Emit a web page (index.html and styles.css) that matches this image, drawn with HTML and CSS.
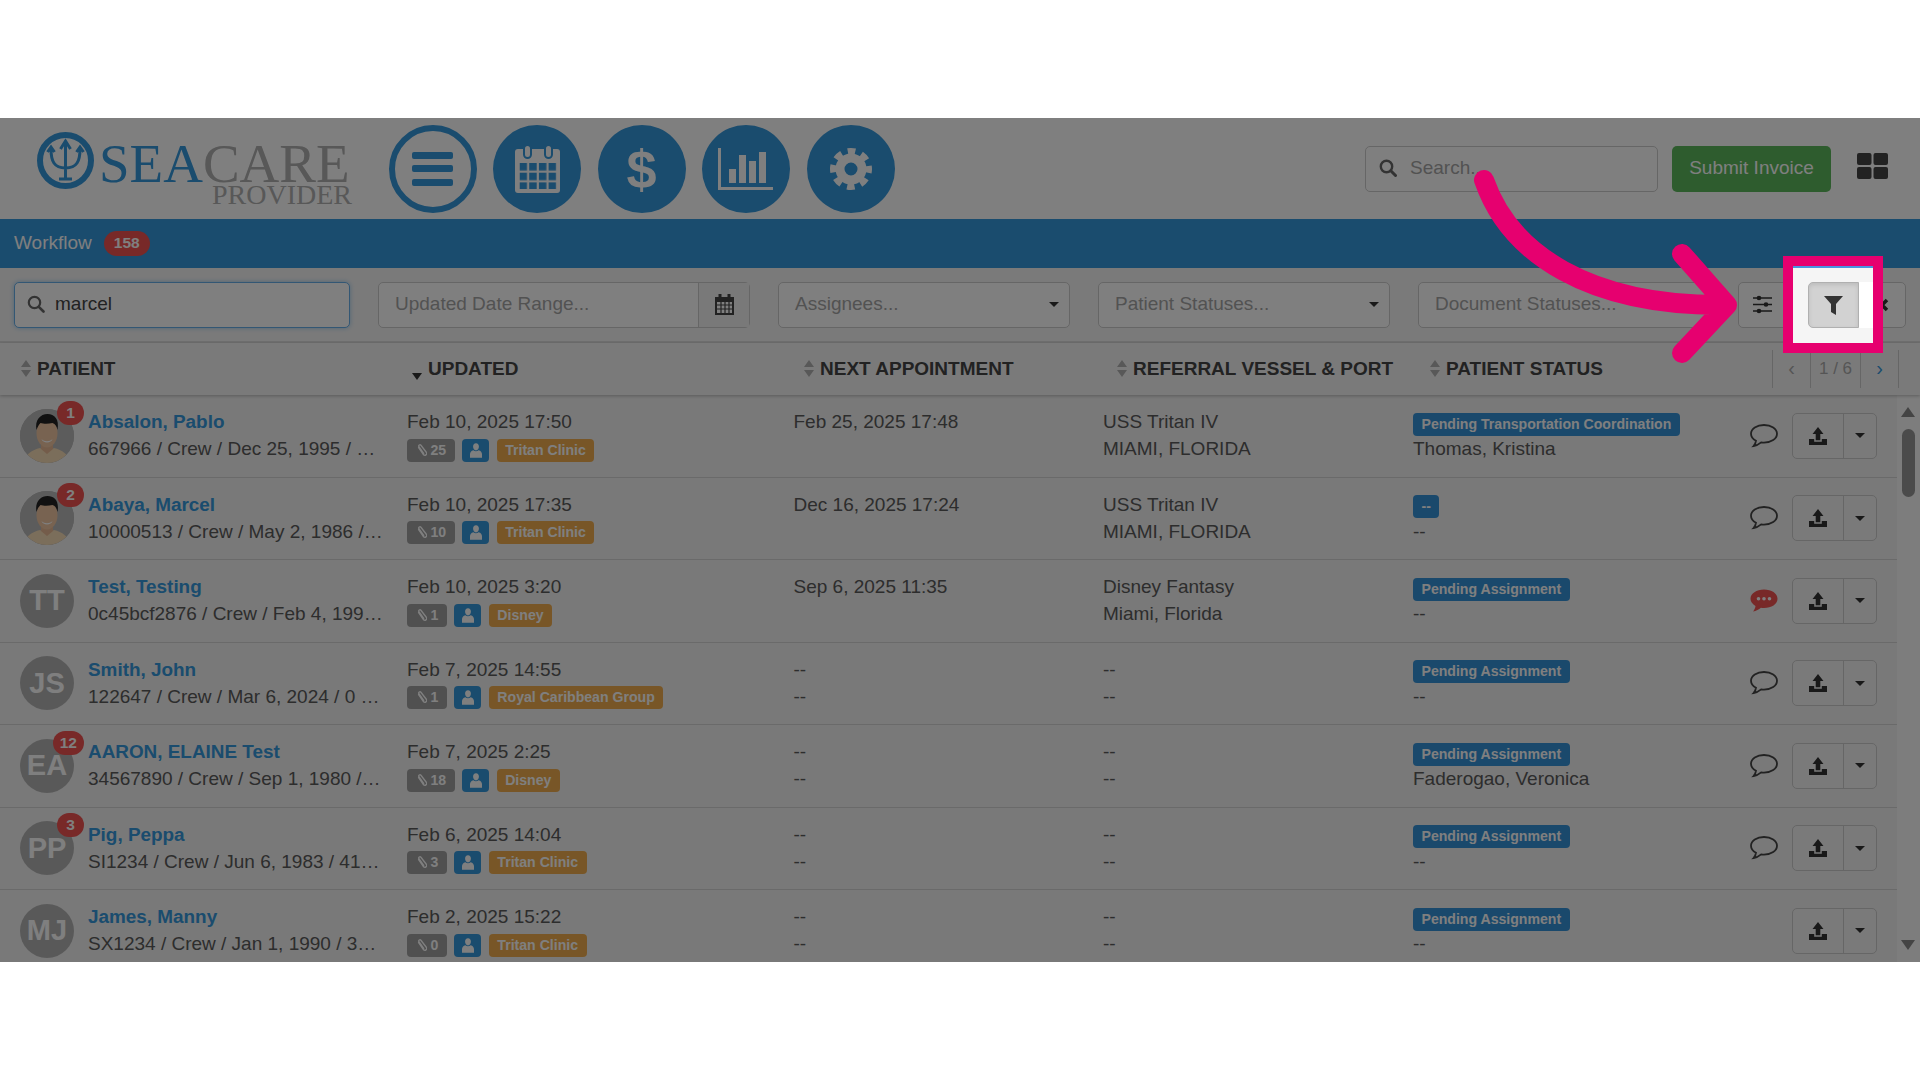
FILE: index.html
```html
<!DOCTYPE html>
<html lang="en">

<head>
  <meta charset="UTF-8">
  <title>SeaCare Provider - Workflow</title>
  <link rel="stylesheet" href="styles.css">
</head>

<body>
  <svg class="defs">
    <symbol id="i-clip" viewBox="0 0 12 16">
      <path d="M3.2 4.6l4.6 8.2a2 2 0 0 0 3.4-2L6 2.2A1.4 1.4 0 0 0 3.600 3.600l4.400 7.800" fill="none" stroke="currentColor" stroke-width="1.500" stroke-linecap="round" transform="rotate(-6 6 8)" />
    </symbol>
    <symbol id="i-user" viewBox="0 0 14 17">
      <path d="M7 0c2.200 0 3.400 1.600 3.400 3.800S9 8.400 7 8.400 3.600 6 3.600 3.800 4.800 0 7 0zM4 8.200c1.700 1.500 4.300 1.500 6 0 2.600.8 4 2.200 4 4.800v4H0v-4c0-2.600 1.400-4 4-4.800z" fill="currentColor" />
    </symbol>
    <symbol id="i-chat" viewBox="0 0 28 24">
      <path d="M14 1C6.800 1 1 4.800 1 9.700c0 3 2 5.400 5 7-.2 1.900-1.100 3.900-2.400 5.300 3-.4 5.800-2.100 7.600-3.600.9.100 1.800.2 2.800.2 7.200 0 13-3.800 13-8.900S21.200 1 14 1z" fill="none" stroke="currentColor" stroke-width="1.800" />
    </symbol>
    <symbol id="i-chat-on" viewBox="0 0 28 24">
      <path d="M14 .5C6.500.5.500 4.500.500 9.700c0 3 2 5.600 5 7.200-.2 1.900-1.100 3.900-2.400 5.600 3-.4 5.900-2.100 7.800-3.700.9.100 2 .2 3.100.2 7.500 0 13.500-4 13.500-9.300S21.500.5 14 .5z" fill="currentColor" />
      <circle cx="8.500" cy="9.700" r="1.800" fill="#fff" />
      <circle cx="14" cy="9.700" r="1.800" fill="#fff" />
      <circle cx="19.500" cy="9.700" r="1.800" fill="#fff" />
    </symbol>
    <symbol id="i-upload" viewBox="0 0 18 18">
      <path d="M9 0l5.500 7H11.300v6.200H6.700V7H3.500zM0 12h5.200v2.800h7.600V12H18v6H0z" fill="currentColor" />
    </symbol>
    <symbol id="i-face" viewBox="0 0 54 54">
      <rect width="54" height="54" fill="#b8b8b8" />
      <path d="M4 54c1-9 8-13 16-15l7 4 7-4c8 2 15 6 16 15z" fill="#f6dcb6" />
      <path d="M21 30h12v10l-6 5-6-5z" fill="#e8b994" />
      <ellipse cx="27" cy="24" rx="10.500" ry="14.500" fill="#f0c6a2" />
      <path d="M16.500 21c-2-10 4-16 11-16s12 5 10 16c-1-4-2-6-5-7-4 1-9 1-12 0-2 2-3 4-4 7z" fill="#222" />
      <path d="M21.500 30c3 3 8 3 11 0-1 4.500-10 4.500-11 0z" fill="#fff" />
    </symbol>
  </svg>

  <div class="app">
    <header class="topbar">
      <div class="logo">
        <svg class="logo-ring" viewBox="0 0 57 57">
          <circle cx="28.500" cy="28.500" r="25.500" fill="none" stroke="#3598dc" stroke-width="6" />
          <path d="M28.500 9v39M22 47h13M23.500 17l5-8 5 8M14 17c0 12 3 19 14.500 19S43 29 43 17M10.500 20l3.500-5 3.500 5M39.500 20l3.500-5 3.500 5" fill="none" stroke="#3598dc" stroke-width="3" />
        </svg>
        <div class="logo-text">
          <div class="logo-main"><span class="logo-sea">SEA</span>CARE</div>
          <div class="logo-sub">PROVIDER</div>
        </div>
      </div>

      <div class="circles">
        <div class="circle circle-menu">
          <span></span><span></span><span></span>
        </div>
        <div class="circle">
          <svg width="45" height="48" viewBox="0 0 45 48">
            <defs>
              <pattern id="cal-cells" x="4.500" y="18" width="9.700" height="9.700" patternUnits="userSpaceOnUse">
                <rect width="7.500" height="7.500" fill="#3598dc" />
              </pattern>
            </defs>
            <rect y="4" width="45" height="44" rx="3" fill="#fff" />
            <rect x="4.500" y="18" width="37" height="26" fill="url(#cal-cells)" />
            <rect x="9" y="0" width="7" height="13" rx="3.500" fill="#fff" stroke="#3598dc" stroke-width="2" />
            <rect x="30" y="0" width="7" height="13" rx="3.500" fill="#fff" stroke="#3598dc" stroke-width="2" />
          </svg>
        </div>
        <div class="circle"><span class="dollar">$</span></div>
        <div class="circle">
          <svg width="56" height="42" viewBox="0 0 56 42">
            <path d="M1.500 0v40.500H55" fill="none" stroke="#fff" stroke-width="3" />
            <rect x="11" y="21" width="7" height="14" fill="#fff" />
            <rect x="21" y="7" width="7" height="28" fill="#fff" />
            <rect x="31" y="13" width="7" height="22" fill="#fff" />
            <rect x="41" y="4" width="7" height="31" fill="#fff" />
          </svg>
        </div>
        <div class="circle">
          <svg width="44" height="44" viewBox="0 0 44 44">
            <circle cx="22" cy="22" r="11" fill="none" stroke="#fff" stroke-width="9" />
            <circle cx="22" cy="22" r="17.500" fill="none" stroke="#fff" stroke-width="7" stroke-dasharray="7.500 6.240" stroke-dashoffset="3.750" />
          </svg>
        </div>
      </div>

      <div class="top-right">
        <div class="top-search">
          <svg class="search-icon" width="18" height="18" viewBox="0 0 18 18">
            <circle cx="7.500" cy="7.500" r="5.700" fill="none" stroke="currentColor" stroke-width="2.400" />
            <path d="M11.800 11.800L16.500 16.500" stroke="currentColor" stroke-width="3" stroke-linecap="round" />
          </svg>
          <span class="placeholder">Search...</span>
        </div>
        <button class="submit">Submit Invoice</button>
        <svg class="apps" width="31" height="26" viewBox="0 0 31 26">
          <rect width="14.500" height="12" rx="2" />
          <rect x="16.500" width="14.500" height="12" rx="2" />
          <rect y="14" width="14.500" height="12" rx="2" />
          <rect x="16.500" y="14" width="14.500" height="12" rx="2" />
        </svg>
      </div>
    </header>

    <nav class="subnav">
      <span>Workflow</span>
      <span class="count">158</span>
    </nav>

    <div class="toolbar">
      <div class="field field-search">
        <svg class="search-icon" width="18" height="18" viewBox="0 0 18 18">
          <circle cx="7.500" cy="7.500" r="5.700" fill="none" stroke="currentColor" stroke-width="2.200" />
          <path d="M11.800 11.800L16.500 16.500" stroke="currentColor" stroke-width="2.600" stroke-linecap="round" />
        </svg>
        <span>marcel</span>
      </div>
      <div class="field field-date">
        <span class="placeholder">Updated Date Range...</span>
        <span class="addon">
          <svg width="19" height="21" viewBox="0 0 19 21">
            <path d="M0 3h19v18H0z" fill="#444" />
            <path d="M2 8h15v11H2z" fill="#fff" />
            <path d="M2 11h15M2 15h15M6 8v11M10 8v11M14 8v11" stroke="#444" stroke-width="1.200" />
            <rect x="3.500" width="3" height="6" fill="#444" />
            <rect x="12.500" width="3" height="6" fill="#444" />
          </svg>
        </span>
      </div>
      <div class="field field-select"><span class="placeholder">Assignees...</span><i class="caret"></i></div>
      <div class="field field-select"><span class="placeholder">Patient Statuses...</span><i class="caret"></i></div>
      <div class="field field-select"><span class="placeholder">Document Statuses...</span></div>
      <div class="tool-group">
        <div class="tool tool-sliders">
          <svg width="19" height="19" viewBox="0 0 19 19">
            <path d="M0 3h19M0 9.500h19M0 16h19" stroke="#333" stroke-width="1.500" />
            <circle cx="6" cy="3" r="2.300" fill="#333" />
            <circle cx="13" cy="9.500" r="2.300" fill="#333" />
            <circle cx="6" cy="16" r="2.300" fill="#333" />
          </svg>
        </div>
        <div class="tool tool-filter"></div>
        <div class="tool tool-close">
          <svg width="14" height="14" viewBox="0 0 14 14">
            <path d="M2 2l10 10M12 2L2 12" stroke="#333" stroke-width="3.500" />
          </svg>
        </div>
      </div>
    </div>

    <div class="thead">
      <div class="th th-first"><i class="sort"></i>PATIENT</div>
      <div class="th"><i class="sort sort-down"></i>UPDATED</div>
      <div class="th"><i class="sort"></i>NEXT APPOINTMENT</div>
      <div class="th"><i class="sort"></i>REFERRAL VESSEL &amp; PORT</div>
      <div class="th th-last">
        <i class="sort"></i>PATIENT STATUS
        <div class="pager">
          <span class="pager-cell pager-prev">&#8249;</span>
          <span class="pager-cell pager-num">1 / 6</span>
          <span class="pager-cell pager-next">&#8250;</span>
        </div>
      </div>
    </div>

    <div class="tbody">
      <div class="rows">
        <div class="row">
          <div class="patient">
            <div class="avatar"><svg width="54" height="54"><use href="#i-face" /></svg><span class="notify">1</span></div>
            <div class="stack">
              <a class="name">Absalon, Pablo</a>
              <div class="line">667966 / Crew / Dec 25, 1995 / …</div>
            </div>
          </div>
          <div class="stack">
            <div class="line">Feb 10, 2025 17:50</div>
            <div class="chips">
              <span class="chip chip-clip"><svg width="11" height="15"><use href="#i-clip" /></svg>25</span>
              <span class="chip chip-user"><svg width="12" height="15"><use href="#i-user" /></svg></span>
              <span class="chip chip-org">Tritan Clinic</span>
            </div>
          </div>
          <div class="stack">
            <div class="line">Feb 25, 2025 17:48</div>
            <div class="line"></div>
          </div>
          <div class="stack">
            <div class="line">USS Tritan IV</div>
            <div class="line">MIAMI, FLORIDA</div>
          </div>
          <div class="status">
            <div class="stack">
              <div class="status-top"><span class="chip chip-status">Pending Transportation Coordination</span></div>
              <div class="line">Thomas, Kristina</div>
            </div>
            <svg class="chat" width="28" height="24"><use href="#i-chat" /></svg>
            <div class="actions">
              <span class="act-main"><svg width="18" height="18"><use href="#i-upload" /></svg></span>
              <span class="act-more"><i class="caret"></i></span>
            </div>
          </div>
        </div>

        <div class="row">
          <div class="patient">
            <div class="avatar"><svg width="54" height="54"><use href="#i-face" /></svg><span class="notify">2</span></div>
            <div class="stack">
              <a class="name">Abaya, Marcel</a>
              <div class="line">10000513 / Crew / May 2, 1986 /…</div>
            </div>
          </div>
          <div class="stack">
            <div class="line">Feb 10, 2025 17:35</div>
            <div class="chips">
              <span class="chip chip-clip"><svg width="11" height="15"><use href="#i-clip" /></svg>10</span>
              <span class="chip chip-user"><svg width="12" height="15"><use href="#i-user" /></svg></span>
              <span class="chip chip-org">Tritan Clinic</span>
            </div>
          </div>
          <div class="stack">
            <div class="line">Dec 16, 2025 17:24</div>
            <div class="line"></div>
          </div>
          <div class="stack">
            <div class="line">USS Tritan IV</div>
            <div class="line">MIAMI, FLORIDA</div>
          </div>
          <div class="status">
            <div class="stack">
              <div class="status-top"><span class="chip chip-status">--</span></div>
              <div class="line">--</div>
            </div>
            <svg class="chat" width="28" height="24"><use href="#i-chat" /></svg>
            <div class="actions">
              <span class="act-main"><svg width="18" height="18"><use href="#i-upload" /></svg></span>
              <span class="act-more"><i class="caret"></i></span>
            </div>
          </div>
        </div>

        <div class="row">
          <div class="patient">
            <div class="avatar">TT</div>
            <div class="stack">
              <a class="name">Test, Testing</a>
              <div class="line">0c45bcf2876 / Crew / Feb 4, 199…</div>
            </div>
          </div>
          <div class="stack">
            <div class="line">Feb 10, 2025 3:20</div>
            <div class="chips">
              <span class="chip chip-clip"><svg width="11" height="15"><use href="#i-clip" /></svg>1</span>
              <span class="chip chip-user"><svg width="12" height="15"><use href="#i-user" /></svg></span>
              <span class="chip chip-org">Disney</span>
            </div>
          </div>
          <div class="stack">
            <div class="line">Sep 6, 2025 11:35</div>
            <div class="line"></div>
          </div>
          <div class="stack">
            <div class="line">Disney Fantasy</div>
            <div class="line">Miami, Florida</div>
          </div>
          <div class="status">
            <div class="stack">
              <div class="status-top"><span class="chip chip-status">Pending Assignment</span></div>
              <div class="line">--</div>
            </div>
            <svg class="chat chat-on" width="28" height="24"><use href="#i-chat-on" /></svg>
            <div class="actions">
              <span class="act-main"><svg width="18" height="18"><use href="#i-upload" /></svg></span>
              <span class="act-more"><i class="caret"></i></span>
            </div>
          </div>
        </div>

        <div class="row">
          <div class="patient">
            <div class="avatar">JS</div>
            <div class="stack">
              <a class="name">Smith, John</a>
              <div class="line">122647 / Crew / Mar 6, 2024 / 0 …</div>
            </div>
          </div>
          <div class="stack">
            <div class="line">Feb 7, 2025 14:55</div>
            <div class="chips">
              <span class="chip chip-clip"><svg width="11" height="15"><use href="#i-clip" /></svg>1</span>
              <span class="chip chip-user"><svg width="12" height="15"><use href="#i-user" /></svg></span>
              <span class="chip chip-org">Royal Caribbean Group</span>
            </div>
          </div>
          <div class="stack">
            <div class="line">--</div>
            <div class="line">--</div>
          </div>
          <div class="stack">
            <div class="line">--</div>
            <div class="line">--</div>
          </div>
          <div class="status">
            <div class="stack">
              <div class="status-top"><span class="chip chip-status">Pending Assignment</span></div>
              <div class="line">--</div>
            </div>
            <svg class="chat" width="28" height="24"><use href="#i-chat" /></svg>
            <div class="actions">
              <span class="act-main"><svg width="18" height="18"><use href="#i-upload" /></svg></span>
              <span class="act-more"><i class="caret"></i></span>
            </div>
          </div>
        </div>

        <div class="row">
          <div class="patient">
            <div class="avatar">EA<span class="notify">12</span></div>
            <div class="stack">
              <a class="name">AARON, ELAINE Test</a>
              <div class="line">34567890 / Crew / Sep 1, 1980 /…</div>
            </div>
          </div>
          <div class="stack">
            <div class="line">Feb 7, 2025 2:25</div>
            <div class="chips">
              <span class="chip chip-clip"><svg width="11" height="15"><use href="#i-clip" /></svg>18</span>
              <span class="chip chip-user"><svg width="12" height="15"><use href="#i-user" /></svg></span>
              <span class="chip chip-org">Disney</span>
            </div>
          </div>
          <div class="stack">
            <div class="line">--</div>
            <div class="line">--</div>
          </div>
          <div class="stack">
            <div class="line">--</div>
            <div class="line">--</div>
          </div>
          <div class="status">
            <div class="stack">
              <div class="status-top"><span class="chip chip-status">Pending Assignment</span></div>
              <div class="line">Faderogao, Veronica</div>
            </div>
            <svg class="chat" width="28" height="24"><use href="#i-chat" /></svg>
            <div class="actions">
              <span class="act-main"><svg width="18" height="18"><use href="#i-upload" /></svg></span>
              <span class="act-more"><i class="caret"></i></span>
            </div>
          </div>
        </div>

        <div class="row">
          <div class="patient">
            <div class="avatar">PP<span class="notify">3</span></div>
            <div class="stack">
              <a class="name">Pig, Peppa</a>
              <div class="line">SI1234 / Crew / Jun 6, 1983 / 41…</div>
            </div>
          </div>
          <div class="stack">
            <div class="line">Feb 6, 2025 14:04</div>
            <div class="chips">
              <span class="chip chip-clip"><svg width="11" height="15"><use href="#i-clip" /></svg>3</span>
              <span class="chip chip-user"><svg width="12" height="15"><use href="#i-user" /></svg></span>
              <span class="chip chip-org">Tritan Clinic</span>
            </div>
          </div>
          <div class="stack">
            <div class="line">--</div>
            <div class="line">--</div>
          </div>
          <div class="stack">
            <div class="line">--</div>
            <div class="line">--</div>
          </div>
          <div class="status">
            <div class="stack">
              <div class="status-top"><span class="chip chip-status">Pending Assignment</span></div>
              <div class="line">--</div>
            </div>
            <svg class="chat" width="28" height="24"><use href="#i-chat" /></svg>
            <div class="actions">
              <span class="act-main"><svg width="18" height="18"><use href="#i-upload" /></svg></span>
              <span class="act-more"><i class="caret"></i></span>
            </div>
          </div>
        </div>

        <div class="row">
          <div class="patient">
            <div class="avatar">MJ</div>
            <div class="stack">
              <a class="name">James, Manny</a>
              <div class="line">SX1234 / Crew / Jan 1, 1990 / 3…</div>
            </div>
          </div>
          <div class="stack">
            <div class="line">Feb 2, 2025 15:22</div>
            <div class="chips">
              <span class="chip chip-clip"><svg width="11" height="15"><use href="#i-clip" /></svg>0</span>
              <span class="chip chip-user"><svg width="12" height="15"><use href="#i-user" /></svg></span>
              <span class="chip chip-org">Tritan Clinic</span>
            </div>
          </div>
          <div class="stack">
            <div class="line">--</div>
            <div class="line">--</div>
          </div>
          <div class="stack">
            <div class="line">--</div>
            <div class="line">--</div>
          </div>
          <div class="status">
            <div class="stack">
              <div class="status-top"><span class="chip chip-status">Pending Assignment</span></div>
              <div class="line">--</div>
            </div>
            <span class="chat"></span>
            <div class="actions">
              <span class="act-main"><svg width="18" height="18"><use href="#i-upload" /></svg></span>
              <span class="act-more"><i class="caret"></i></span>
            </div>
          </div>
        </div>
      </div>

      <div class="scrollbar">
        <i class="scroll-up"></i>
        <i class="scroll-thumb"></i>
        <i class="scroll-down"></i>
      </div>
    </div>

    <!-- tutorial overlay: dims the page, leaves the filter button lit -->
    <div class="dim"></div>
    <div class="spot">
      <div class="spot-strip"></div>
      <div class="spot-row">
        <div class="spot-btn">
          <svg width="19" height="21" viewBox="0 0 19 21">
            <path d="M0 1h19l-7 8v11l-5-3V9z" fill="#333" />
          </svg>
        </div>
        <div class="spot-rest"></div>
      </div>
    </div>
    <svg class="arrow" viewBox="0 118 1920 844">
      <path d="M1484 180C1510 255 1590 305 1720 305M1682 254L1727 305L1682 353" fill="none" stroke="#e6006f" stroke-width="20" stroke-linecap="round" stroke-linejoin="round" />
    </svg>
  </div>
</body>

</html>
```

FILE: styles.css
```css
* {
  box-sizing: border-box;
}

html,
body {
  margin: 0;
  height: 100%;
  background: #fff;
  overflow: hidden;
}

body {
  font-family: "Liberation Sans", Arial, sans-serif;
  font-size: 19px;
  color: #5a5a5a;
}

.defs {
  display: none;
}

.app {
  width: 1920px;
  height: 844px;
  margin-top: 118px;
  position: relative;
  overflow: hidden;
  background: #f5f5f5;
}

/* header */
.topbar {
  height: 101px;
  display: flex;
  background: #fff;
  padding-left: 37px;
  align-items: center;
}

.logo {
  width: 351.500px;
  height: 101px;
  display: flex;
  font-family: "Liberation Serif", "Times New Roman", serif;
  color: #b0b0b0;
}

.logo-ring {
  width: 57px;
  height: 57px;
  margin-top: 14px;
  flex-shrink: 0;
}

.logo-text {
  margin-left: 5px;
}

.logo-main {
  font-size: 55px;
  line-height: 55px;
  margin-top: 18px;
  white-space: nowrap;
}

.logo-sea {
  color: #3598dc;
}

.logo-sub {
  font-size: 28px;
  line-height: 28px;
  margin-top: -10px;
  margin-left: 113px;
}

.circles {
  display: flex;
  gap: 16.500px;
}

.circle {
  width: 88px;
  height: 88px;
  border-radius: 50%;
  background: #3598dc;
  display: flex;
  align-items: center;
  justify-content: center;
}

.circle-menu {
  background: #fff;
  border: 6px solid #3598dc;
  flex-direction: column;
  gap: 6.500px;
}

.circle-menu span {
  width: 41px;
  height: 7px;
  border-radius: 2px;
  background: #3598dc;
}

.dollar {
  color: #fff;
  font-weight: bold;
  font-size: 54px;
  line-height: 54px;
}

.top-right {
  margin-left: auto;
  padding-right: 32px;
  display: flex;
  align-items: center;
}

.top-search {
  width: 293px;
  height: 46px;
  border: 1.500px solid #ccc;
  border-radius: 5px;
  display: flex;
  align-items: center;
  gap: 13px;
  padding: 0 0 2px 13px;
}

.search-icon {
  color: #666;
  flex-shrink: 0;
}

.placeholder {
  color: #a5a5a5;
  white-space: nowrap;
}

.submit {
  width: 159px;
  height: 46px;
  margin-left: 14px;
  padding: 0 0 2px;
  border: 0;
  border-radius: 5px;
  background: #5cb85c;
  color: #fff;
  font: inherit;
}

.apps {
  margin-left: 26px;
  margin-top: -6px;
  fill: #444;
}

/* blue bar */
.subnav {
  height: 49px;
  background: #3598dc;
  color: #fff;
  display: flex;
  align-items: center;
  gap: 12px;
  padding: 0 0 1px 14px;
}

.count {
  width: 46px;
  height: 25px;
  border-radius: 13px;
  background: #f05250;
  color: #fff;
  font-weight: bold;
  font-size: 15.500px;
  display: flex;
  align-items: center;
  justify-content: center;
}

/* filters */
.toolbar {
  height: 75px;
  display: flex;
  align-items: center;
  gap: 28px;
  padding-left: 14px;
  border-bottom: 2px solid #ddd;
}

.field {
  height: 46px;
  background: #fff;
  border: 1.500px solid #ccc;
  border-radius: 5px;
  display: flex;
  align-items: center;
  flex-shrink: 0;
}

.field-search {
  width: 336px;
  padding: 0 0 2px 12px;
  gap: 10px;
  color: #444;
  border-color: #66afe9;
  box-shadow: 0 0 5px rgba(102, 175, 233, .6);
}

.field-date {
  width: 372px;
  padding-left: 16px;
  justify-content: space-between;
}

.field-date .placeholder,
.field-select .placeholder {
  margin-bottom: 2px;
}

.addon {
  width: 51px;
  height: 100%;
  background: #f3f3f3;
  border-left: 1.500px solid #ccc;
  display: flex;
  align-items: center;
  justify-content: center;
}

.field-select {
  width: 292px;
  padding: 0 10px 0 16px;
  justify-content: space-between;
}

.caret {
  width: 0;
  height: 0;
  border-top: 5px solid #333;
  border-left: 5px solid transparent;
  border-right: 5px solid transparent;
}

.tool-group {
  width: 168px;
  height: 46px;
  display: flex;
  background: #fff;
  border: 1.500px solid #ccc;
  border-radius: 5px;
  flex-shrink: 0;
}

.tool {
  display: flex;
  align-items: center;
  justify-content: center;
}

.tool-sliders {
  width: 70px;
  padding-right: 22px;
}

.tool-filter {
  width: 51px;
}

.tool-close {
  width: 47px;
}

/* table head */
.thead {
  height: 52px;
  padding-bottom: 1px;
  display: grid;
  grid-template-columns: 411px 392px 313px 313px 1fr;
  align-items: center;
  color: #444;
  font-weight: bold;
  box-shadow: 0 1px 3px rgba(0, 0, 0, .25);
  position: relative;
}

.th {
  display: flex;
  align-items: center;
  gap: 5px;
  white-space: nowrap;
}

.th-first {
  padding-left: 20px;
}

.sort {
  width: 12px;
  height: 17px;
  flex-shrink: 0;
  position: relative;
}

.sort::before,
.sort::after {
  content: '';
  position: absolute;
  left: 1px;
  border-left: 5px solid transparent;
  border-right: 5px solid transparent;
}

.sort::before {
  top: 0;
  border-bottom: 7px solid #b0b0b0;
}

.sort::after {
  bottom: 0;
  border-top: 7px solid #b0b0b0;
}

.sort-down::before {
  display: none;
}

.sort-down::after {
  border-top-color: #333;
  bottom: -3px;
}

.th-last {
  height: 38px;
}

.pager {
  margin-left: auto;
  margin-right: 21px;
  height: 38px;
  display: flex;
  font-weight: normal;
  font-size: 17px;
  color: #aaa;
  border-right: 1.500px solid #ccc;
}

.pager-cell {
  border-left: 1.500px solid #ccc;
  display: flex;
  align-items: center;
  justify-content: center;
}

.pager-prev {
  width: 38px;
  font-size: 20px;
}

.pager-num {
  width: 50px;
}

.pager-next {
  width: 38px;
  font-size: 20px;
  color: #3598dc;
}

/* table body */
.tbody {
  height: 567px;
  display: flex;
}

.rows {
  width: 1896.500px;
  overflow: hidden;
  flex-shrink: 0;
}

.row {
  height: 82.500px;
  display: grid;
  grid-template-columns: 407px 386.500px 309.500px 310px 1fr;
  align-items: center;
  background: #f2f2f2;
  border-bottom: 1.500px solid #d4d4d4;
}

.patient {
  display: flex;
  align-items: center;
  gap: 14px;
  padding-left: 20px;
}

.avatar {
  width: 54px;
  height: 54px;
  border-radius: 50%;
  background: #b3b3b3;
  color: #fff;
  font-size: 29px;
  font-weight: bold;
  display: flex;
  align-items: center;
  justify-content: center;
  position: relative;
  flex-shrink: 0;
}

.avatar svg {
  border-radius: 50%;
}

.notify {
  position: absolute;
  top: -8px;
  right: -10px;
  min-width: 27px;
  height: 24px;
  padding: 0 7px;
  border-radius: 12px;
  background: #f05250;
  color: #fff;
  font-size: 15.500px;
  display: flex;
  align-items: center;
  justify-content: center;
}

.stack {
  min-width: 0;
  padding-bottom: 1px;
}

.line,
.name {
  display: block;
  height: 27px;
  line-height: 27px;
  white-space: nowrap;
}

.name {
  font-size: 18.900px;
  color: #3598dc;
  font-weight: bold;
}

.chips {
  height: 27px;
  padding-top: 3.500px;
  display: flex;
  gap: 7.500px;
}

.chip {
  height: 23px;
  padding: 0 8.500px;
  border-radius: 4px;
  color: #fff;
  font-size: 14.100px;
  font-weight: bold;
  line-height: 23px;
  white-space: nowrap;
  display: inline-flex;
  align-items: center;
}

.chip-clip {
  background: #a0a0a0;
  gap: 4px;
}

.chip-user {
  background: #3598dc;
  width: 27px;
  justify-content: center;
  padding: 0;
}

.chip-org {
  background: #f0ad4e;
}

.chip-status {
  background: #3592d8;
}

.status-top {
  height: 27px;
  padding-top: 3.500px;
}

.status {
  display: flex;
  align-items: center;
  padding-right: 20px;
}

.chat {
  width: 28px;
  height: 24px;
  margin-left: auto;
  margin-right: 14px;
  color: #444;
  flex-shrink: 0;
}

.chat-on {
  color: #f05250;
}

.actions {
  width: 84.500px;
  height: 46px;
  display: flex;
  background: #f5f5f5;
  border: 1.500px solid #ccc;
  border-radius: 5px;
  color: #333;
  flex-shrink: 0;
}

.act-main {
  width: 51px;
  border-right: 1.500px solid #ccc;
  display: flex;
  align-items: center;
  justify-content: center;
}

.act-more {
  flex: 1;
  display: flex;
  align-items: center;
  justify-content: center;
}

.scrollbar {
  flex: 1;
  display: flex;
  flex-direction: column;
  align-items: center;
  padding: 12px 0 12px;
  background: #fafafa;
}

.scroll-up {
  border-bottom: 10px solid #888;
  border-left: 7px solid transparent;
  border-right: 7px solid transparent;
}

.scroll-thumb {
  width: 13px;
  height: 68px;
  margin-top: 12px;
  border-radius: 7px;
  background: #969696;
}

.scroll-down {
  margin-top: auto;
  border-top: 10px solid #888;
  border-left: 7px solid transparent;
  border-right: 7px solid transparent;
}

/* overlay */
.dim {
  position: absolute;
  inset: 0;
  background: rgba(0, 0, 0, .5);
}

.spot {
  position: absolute;
  left: 1783px;
  top: 138px;
  width: 100px;
  height: 97px;
  border: 10px solid #e6006f;
  background: #f5f5f5;
}

.spot-strip {
  height: 2px;
  background: #4a94e0;
}

.spot-row {
  height: 46px;
  margin-top: 14px;
  display: flex;
  padding-left: 15px;
}

.spot-btn {
  width: 51px;
  background: #d2d2d2;
  border: 1.500px solid #b0b0b0;
  border-radius: 5px 0 0 5px;
  display: flex;
  align-items: center;
  justify-content: center;
  box-shadow: inset 0 2px 4px rgba(0, 0, 0, .1);
}

.spot-rest {
  flex: 1;
  background: #fff;
}

.arrow {
  position: absolute;
  left: 0;
  top: 0;
  width: 1920px;
  height: 844px;
}
```
